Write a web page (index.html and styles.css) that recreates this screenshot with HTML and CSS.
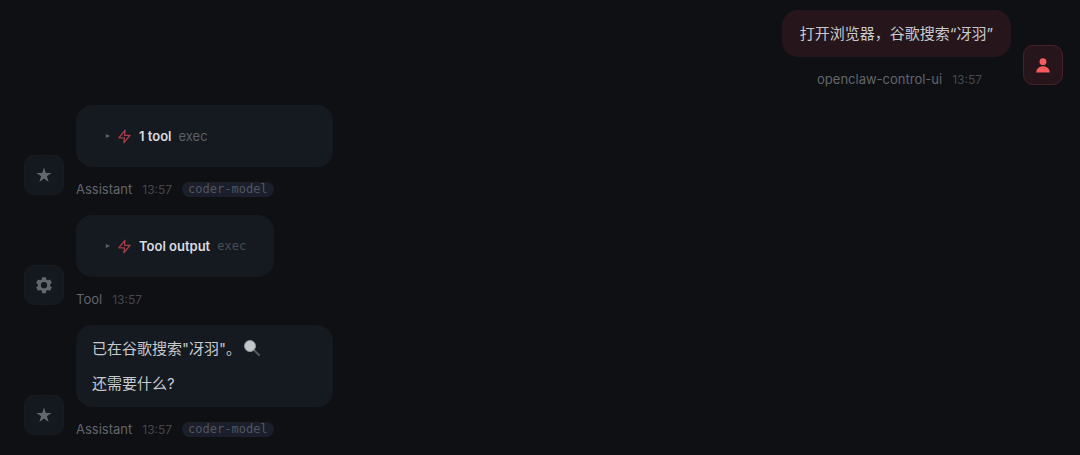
FILE: index.html
```html
<!DOCTYPE html>
<html lang="zh-CN">
<head>
<meta charset="utf-8">
<title>OpenClaw Control</title>
<meta name="viewport" content="width=device-width, initial-scale=1">
<link rel="stylesheet" href="styles.css">
</head>
<body>
<svg class="symbols" aria-hidden="true">
  <symbol id="star" viewBox="0 0 24 24"><path d="M12 2l2.4 7.2H22l-6.1 4.6 2.3 7.4L12 16.7l-6.2 4.5 2.3-7.4L2 9.2h7.600z"/></symbol>
  <symbol id="bolt" viewBox="0 0 24 24"><path d="M13 2 3 14h9l-1 8 10-12h-9l1-8z"/></symbol>
</svg>
<main class="thread">
  <article class="group group-user">
    <div class="avatar avatar-user">
      <svg class="avatar-icon" viewBox="0 0 24 24" aria-hidden="true"><circle cx="12" cy="7.500" r="4.600"/><path d="M3 22c0-5.500 4-8.500 9-8.500s9 3 9 8.500z"/></svg>
    </div>
    <div class="messages">
      <div class="bubble bubble-user"><p>打开浏览器，谷歌搜索“冴羽”</p></div>
      <footer class="meta"><span class="sender">openclaw-control-ui</span><time class="time">13:57</time></footer>
    </div>
  </article>

  <article class="group">
    <div class="avatar"><svg class="avatar-icon" aria-hidden="true"><use href="#star"/></svg></div>
    <div class="messages">
      <div class="bubble bubble-tool bubble-wide">
        <details class="tool">
          <summary class="tool-head"><span class="marker"></span><svg class="bolt" aria-hidden="true"><use href="#bolt"/></svg><strong class="tool-title">1 tool</strong><span class="tool-name">exec</span></summary>
        </details>
      </div>
      <footer class="meta"><span class="sender">Assistant</span><time class="time">13:57</time><span class="model">coder-model</span></footer>
    </div>
  </article>

  <article class="group">
    <div class="avatar">
      <svg class="avatar-icon" viewBox="0 0 24 24" aria-hidden="true"><path fill-rule="evenodd" d="M9.500 1.500h5l.6 3.100 1.900 1.100 3-1 2.500 4.300-2.400 2.100v2.200l2.400 2.100-2.500 4.300-3-1-1.900 1.100-.6 3.100h-5l-.6-3.100L7 18.700l-3 1-2.500-4.300 2.400-2.100v-2.200L1.500 9 4 4.700l3 1 1.900-1.100zM12 8a4.200 4.200 0 1 0 0 8.400A4.200 4.200 0 0 0 12 8z"/></svg>
    </div>
    <div class="messages">
      <div class="bubble bubble-tool">
        <details class="tool">
          <summary class="tool-head"><span class="marker"></span><svg class="bolt" aria-hidden="true"><use href="#bolt"/></svg><strong class="tool-title">Tool output</strong><code class="tool-name tool-code">exec</code></summary>
        </details>
      </div>
      <footer class="meta"><span class="sender">Tool</span><time class="time">13:57</time></footer>
    </div>
  </article>

  <article class="group">
    <div class="avatar"><svg class="avatar-icon" aria-hidden="true"><use href="#star"/></svg></div>
    <div class="messages">
      <div class="bubble bubble-wide">
        <p>已在谷歌搜索"冴羽"。<svg class="lens" viewBox="0 0 16 16" role="img" aria-label="搜索"><path d="M9.500 9.500 15 15" stroke="#55595e" stroke-width="2" stroke-linecap="round"/><circle cx="6" cy="6" r="5.500" fill="#c3c9cb" stroke="#90979b"/></svg></p>
        <p>还需要什么?</p>
      </div>
      <footer class="meta"><span class="sender">Assistant</span><time class="time">13:57</time><span class="model">coder-model</span></footer>
    </div>
  </article>
</main>
</body>
</html>
```
FILE: styles.css
```css
* {
  box-sizing: border-box;
}

body {
  margin: 0;
  background: #0e1014;
  color: #c6c9cd;
  font: 15px/24px Inter, "Noto Sans CJK SC", sans-serif;
}

p {
  margin: 0;
}

.symbols {
  position: absolute;
  width: 0;
  height: 0;
}

.thread {
  display: flex;
  flex-direction: column;
  gap: 16px;
  padding: 10px 17px 16px 24px;
}

.group {
  display: flex;
  align-items: flex-end;
  gap: 12px;
}

.group-user {
  flex-direction: row-reverse;
}

.messages {
  display: flex;
  flex-direction: column;
  align-items: flex-start;
  gap: 13px;
}

.avatar {
  display: grid;
  place-items: center;
  flex: none;
  width: 40px;
  height: 40px;
  margin-bottom: 4px;
  border: 1px solid #181c21;
  border-radius: 10px;
  background: #14191f;
}

.avatar-user {
  border-color: #4a2027;
  background: #26151b;
}

.avatar-icon {
  width: 18px;
  height: 18px;
  fill: #63676c;
}

.avatar-user .avatar-icon {
  fill: #f35b5d;
}

.bubble {
  display: flex;
  flex-direction: column;
  gap: 11px;
  padding: 12px 16px 11px;
  border-radius: 16px;
  background: #151a21;
}

.bubble-user {
  padding: 12px 18px 11px;
  background: #26161b;
}

.bubble-wide {
  width: 257px;
  max-width: 100%;
}

.bubble-tool {
  padding: 19px 28px;
}

.tool-head {
  display: flex;
  align-items: center;
  gap: 7px;
  list-style: none;
  font-size: 13px;
  cursor: pointer;
}

.marker {
  width: 6px;
  height: 4px;
  background: #5d6166;
  clip-path: polygon(30% 0, 100% 50%, 30% 100%);
}

.bolt {
  width: 15px;
  height: 15px;
  fill: none;
  stroke: #a63c49;
  stroke-width: 2;
  stroke-linejoin: round;
}

.tool-title {
  color: #d9dbdf;
  font-weight: 600;
}

.tool-name {
  color: #5b5f64;
}

.tool-code {
  color: #484c53;
  font-family: "DejaVu Sans Mono", monospace;
  font-size: 12px;
}

.lens {
  width: 16px;
  height: 16px;
  margin-left: 3px;
  vertical-align: -2px;
}

.meta {
  display: flex;
  align-items: center;
  gap: 10px;
  height: 19px;
  font-size: 13px;
  line-height: 19px;
}

.group-user .meta {
  align-self: flex-end;
  padding-right: 29px;
}

.sender {
  color: #62656b;
}

.time {
  color: #45484e;
  font-size: 12px;
}

.model {
  padding: 0 6px;
  border-radius: 8px;
  background: #1b1f2b;
  color: #51555f;
  font: 12px/15px "DejaVu Sans Mono", monospace;
}
```
